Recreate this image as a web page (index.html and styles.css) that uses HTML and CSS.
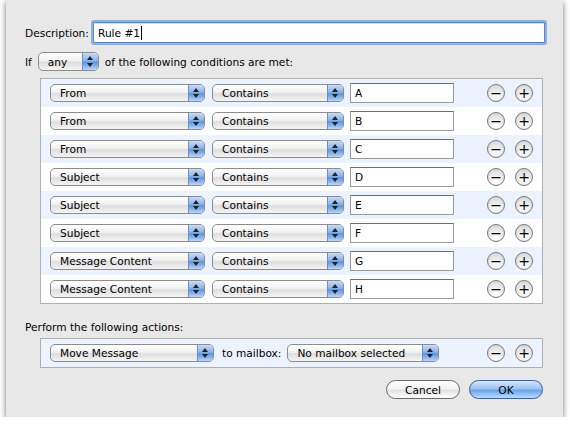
FILE: index.html
```html
<!DOCTYPE html>
<html lang="en">
  <head>
    <meta charset="UTF-8" />
    <title>Rules</title>
    <link rel="stylesheet" href="styles.css">
  </head>
  <body>
    <div class="sheet">
      <!-- Rule name -->
      <div class="desc-row">
        <label class="label">Description:</label>
        <div class="text-field focused">Rule #1<span class="caret"></span></div>
      </div>

      <div class="if-row">
        <span class="label">If</span>
        <div class="popup popup-any"><span class="popup-text">any</span><span class="popup-cap"></span></div>
        <span class="label">of the following conditions are met:</span>
      </div>

      <!-- Conditions list -->
      <div class="list-box" id="conditions"></div>

      <div class="section-label">Perform the following actions:</div>

      <div class="list-box actions">
        <div class="rule-row">
          <div class="popup popup-action"><span class="popup-text">Move Message</span><span class="popup-cap"></span></div>
          <span class="label to-label">to mailbox:</span>
          <div class="popup popup-mailbox"><span class="popup-text">No mailbox selected</span><span class="popup-cap"></span></div>
          <div class="spacer"></div>
          <div class="round-btn">&minus;</div>
          <div class="round-btn">+</div>
        </div>
      </div>

      <div class="button-row">
        <div class="push-btn">Cancel</div>
        <div class="push-btn default">OK</div>
      </div>
    </div>

    <script>
      const conditions = [
        ["From", "A"], ["From", "B"], ["From", "C"],
        ["Subject", "D"], ["Subject", "E"], ["Subject", "F"],
        ["Message Content", "G"], ["Message Content", "H"]
      ];
      const list = document.getElementById("conditions");

      conditions.forEach(([field, value]) => {
        const row = document.createElement("div");
        row.className = "rule-row";
        row.innerHTML = `
          <div class="popup popup-field"><span class="popup-text">${field}</span><span class="popup-cap"></span></div>
          <div class="popup popup-op"><span class="popup-text">Contains</span><span class="popup-cap"></span></div>
          <div class="text-field small">${value}</div>
          <div class="spacer"></div>
          <div class="round-btn">&minus;</div>
          <div class="round-btn">+</div>`;
        list.appendChild(row);
      });
    </script>
  </body>
</html>
```

FILE: styles.css
```css
/* Sheet dialog */
body {
  margin: 0;
  background-color: #ffffff;
  font-family: "DejaVu Sans", Verdana, sans-serif;
  font-size: 10.6px;
  color: #000;
}

.sheet {
  width: 557px;
  height: 417px;
  margin-left: 6px;
  background-color: #e8e8e8;
  box-shadow: 0 2px 6px rgba(0, 0, 0, 0.55);
  box-sizing: border-box;
  padding-top: 22px;
  display: flex;
  flex-direction: column;
}

.label {
  white-space: nowrap;
}

.desc-row {
  display: flex;
  align-items: center;
  padding-left: 19px;
  padding-right: 18px;
}

.text-field {
  background: #fff;
  border: 1px solid #9a9a9a;
  border-top-color: #6f6f6f;
  box-sizing: border-box;
  display: flex;
  align-items: center;
  padding-left: 4px;
}

.text-field.focused {
  width: 452px;
  height: 21px;
  margin-left: auto;
  border: 1px solid #5b85c4;
  box-shadow: 0 0 0 2px #8fb0e0, inset 0 1px 1px rgba(0, 0, 0, 0.15);
  border-radius: 1px;
}

.caret {
  width: 1px;
  height: 14px;
  background: #000;
  margin-left: 1px;
}

.text-field.small {
  width: 104px;
  height: 20px;
  margin-left: 6px;
}

.if-row {
  display: flex;
  align-items: center;
  padding-left: 19px;
  margin-top: 9px;
  gap: 6px;
}

/* Aqua popup buttons */
.popup {
  height: 18px;
  box-sizing: border-box;
  border: 1px solid #8c8c8c;
  border-radius: 5px;
  background: linear-gradient(#ffffff 0%, #f2f2f2 45%, #dedede 55%, #f4f4f4 100%);
  display: flex;
  align-items: center;
  overflow: hidden;
}

.popup-text {
  flex-grow: 1;
  padding-left: 9px;
  white-space: nowrap;
}

.popup-cap {
  width: 15px;
  height: 100%;
  border-left: 1px solid #6c8fc4;
  background: linear-gradient(#c8dcf6 0%, #8cb3ea 45%, #5e93de 55%, #b8d6fb 100%);
  position: relative;
}

/* up and down arrows on the cap */
.popup-cap::before,
.popup-cap::after {
  content: "";
  position: absolute;
  left: 4px;
  border-left: 3px solid transparent;
  border-right: 3px solid transparent;
}

.popup-cap::before {
  top: 3px;
  border-bottom: 4px solid #222;
}

.popup-cap::after {
  bottom: 3px;
  border-top: 4px solid #222;
}

.popup-any {
  width: 61px;
  height: 19px;
}

.list-box {
  margin-left: 34px;
  width: 503px;
  border: 1px solid #b0b0b0;
  box-sizing: border-box;
  background: #fff;
}

#conditions {
  margin-top: 7px;
}

.rule-row {
  height: 28px;
  display: flex;
  align-items: center;
  padding-left: 9px;
  padding-right: 9px;
}

#conditions .rule-row:nth-child(odd) {
  background-color: #edf3fe;
}

.popup-field {
  width: 155px;
}

.popup-op {
  width: 132px;
  margin-left: 7px;
}

.spacer {
  flex-grow: 1;
}

.round-btn {
  width: 18px;
  height: 18px;
  box-sizing: border-box;
  border: 1px solid #777;
  border-radius: 50%;
  background: radial-gradient(circle at 50% 75%, #ffffff 0%, #e4e4e4 60%, #cfcfcf 100%);
  display: flex;
  align-items: center;
  justify-content: center;
  font-size: 14px;
  line-height: 1;
  margin-left: 10px;
}

.section-label {
  padding-left: 19px;
  margin-top: 17px;
  margin-bottom: 5px;
}

.actions .rule-row {
  background-color: #edf3fe;
}

.popup-action {
  width: 164px;
}

.to-label {
  margin: 0 6px 0 8px;
}

.popup-mailbox {
  width: 152px;
}

.button-row {
  display: flex;
  justify-content: flex-end;
  gap: 9px;
  padding-right: 20px;
  margin-top: 12px;
}

/* Aqua push buttons */
.push-btn {
  width: 74px;
  height: 19px;
  box-sizing: border-box;
  border: 1px solid #6a6a6a;
  border-radius: 10px;
  background: linear-gradient(#ffffff 0%, #f3f3f3 45%, #e2e2e2 55%, #ffffff 100%);
  display: flex;
  align-items: center;
  justify-content: center;
}

.push-btn.default {
  border-color: #3e5f99;
  background: linear-gradient(#d4e6fb 0%, #9dc3f2 45%, #6aa3ea 55%, #b9defd 100%);
}
```
